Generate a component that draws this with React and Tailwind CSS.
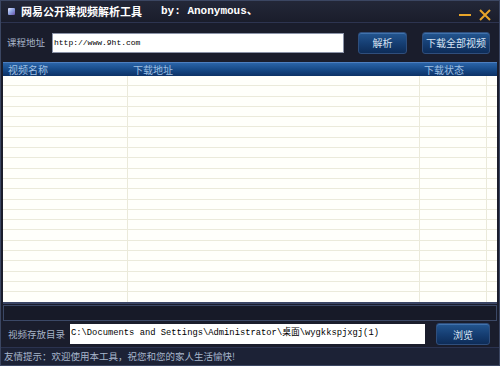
import React from "react";

const cjk = { fontFamily: '"Noto Sans CJK SC", "Liberation Sans", sans-serif' };
const mono = { fontFamily: '"Liberation Mono", "Noto Sans CJK SC", monospace' };

function Btn({ children, className = "" }) {
  return (
    <div
      className={
        "flex shrink-0 items-center justify-center whitespace-nowrap rounded-[3px] border border-[#2f4e7c] bg-gradient-to-b from-[#245690] via-[#163f74] to-[#0d2c58] text-[10px] text-[#d8e4f4] shadow-[inset_0_1px_0_rgba(120,170,230,0.35)] " +
        className
      }
      style={cjk}
    >
      {children}
    </div>
  );
}

export default function App() {
  const rows = Array.from({ length: 22 });
  return (
    <div
      className="flex h-[366px] w-[500px] flex-col overflow-hidden border border-[#3b4662] bg-[#1a1d2c]"
      style={cjk}
    >
      {/* Title bar */}
      <div className="flex h-[22px] shrink-0 items-center border-b border-[#2d3450] bg-gradient-to-b from-[#232738] to-[#1a1d2b] pl-[7px] pr-[8px]">
        <div className="h-[7px] w-[7px] shrink-0 rounded-[1px] bg-gradient-to-br from-[#e8e8ff] via-[#8aa0e0] to-[#6a4fa8]" />
        <div className="ml-[6px] whitespace-nowrap text-[11px] font-bold leading-none text-white" style={cjk}>
          网易公开课视频解析工具
        </div>
        <div className="ml-[19px] whitespace-nowrap text-[11px] font-bold leading-none text-white" style={mono}>
          by: Anonymous、
        </div>
        <div className="flex-1" />
        <div className="mt-[6px] flex items-center gap-[8px]">
          <div className="h-[2px] w-[12px] bg-[#e8a52a]" />
          <svg width="12" height="12" viewBox="0 0 12 12">
            <path d="M1 1 L11 11 M11 1 L1 11" stroke="#e8a52a" strokeWidth="2" />
          </svg>
        </div>
      </div>

      {/* URL row */}
      <div className="flex h-[39px] shrink-0 items-center pl-[6px] pr-[9px]">
        <div className="w-[45px] shrink-0 whitespace-nowrap text-[9.5px] text-[#a7b4c8]">课程地址</div>
        <div className="flex h-[20px] w-[292px] shrink-0 items-center border border-[#8b93a8] bg-white pl-[1px] text-[8px] text-black" style={mono}>
          http://www.9ht.com
        </div>
        <Btn className="ml-[14px] h-[22px] w-[49px]">解析</Btn>
        <Btn className="ml-[15px] h-[22px] w-[68px]">下载全部视频</Btn>
      </div>

      {/* Table */}
      <div className="mx-[2px] flex h-[242px] shrink-0 flex-col">
        <div className="flex h-[14px] shrink-0 items-center border-t border-[#4d7fc0] bg-gradient-to-b from-[#2a64a8] via-[#174a88] to-[#0d3266] text-[10px] leading-none text-[#9fc0e4]">
          <div className="w-[125px] pl-[5px]">视频名称</div>
          <div className="w-[292px] pl-[5px]">下载地址</div>
          <div className="flex-1 pl-[4px]">下载状态</div>
        </div>
        <div className="flex flex-1 flex-col overflow-hidden bg-[#fffffb]">
          {rows.map((_, i) => (
            <div key={i} className="flex h-[10.3px] shrink-0 border-b border-[#ebeadb]">
              <div className="w-[125px] border-r border-[#ebeadb]" />
              <div className="w-[292px] border-r border-[#ebeadb]" />
              <div className="w-[67px] border-r border-[#ebeadb]" />
              <div className="flex-1" />
            </div>
          ))}
        </div>
        <div className="h-[2px] bg-[#3a4566]" />
      </div>

      {/* scroll strip */}
      <div className="mx-[2px] mt-[1px] h-[16px] shrink-0 border border-[#3b4866] bg-[#171a28]" />

      {/* Dir row */}
      <div className="flex h-[26px] shrink-0 items-center pl-[7px] pr-[9px]">
        <div className="w-[62px] shrink-0 whitespace-nowrap text-[9.5px] text-[#a7b4c8]">视频存放目录</div>
        <div className="flex h-[20px] w-[355px] shrink-0 items-center overflow-hidden whitespace-nowrap bg-white pl-[1px] text-[8.8px] text-black" style={mono}>
          C:\Documents and Settings\Administrator\桌面\wygkkspjxgj(1)
        </div>
        <Btn className="ml-[11px] h-[22px] w-[54px]">浏览</Btn>
      </div>

      {/* Status */}
      <div className="flex flex-1 items-center whitespace-nowrap border-t border-[#2b3350] bg-[#1c2236] pl-[3px] text-[9.5px] text-[#a7b6cc]">
        友情提示：欢迎使用本工具，祝您和您的家人生活愉快!
      </div>
    </div>
  );
}
